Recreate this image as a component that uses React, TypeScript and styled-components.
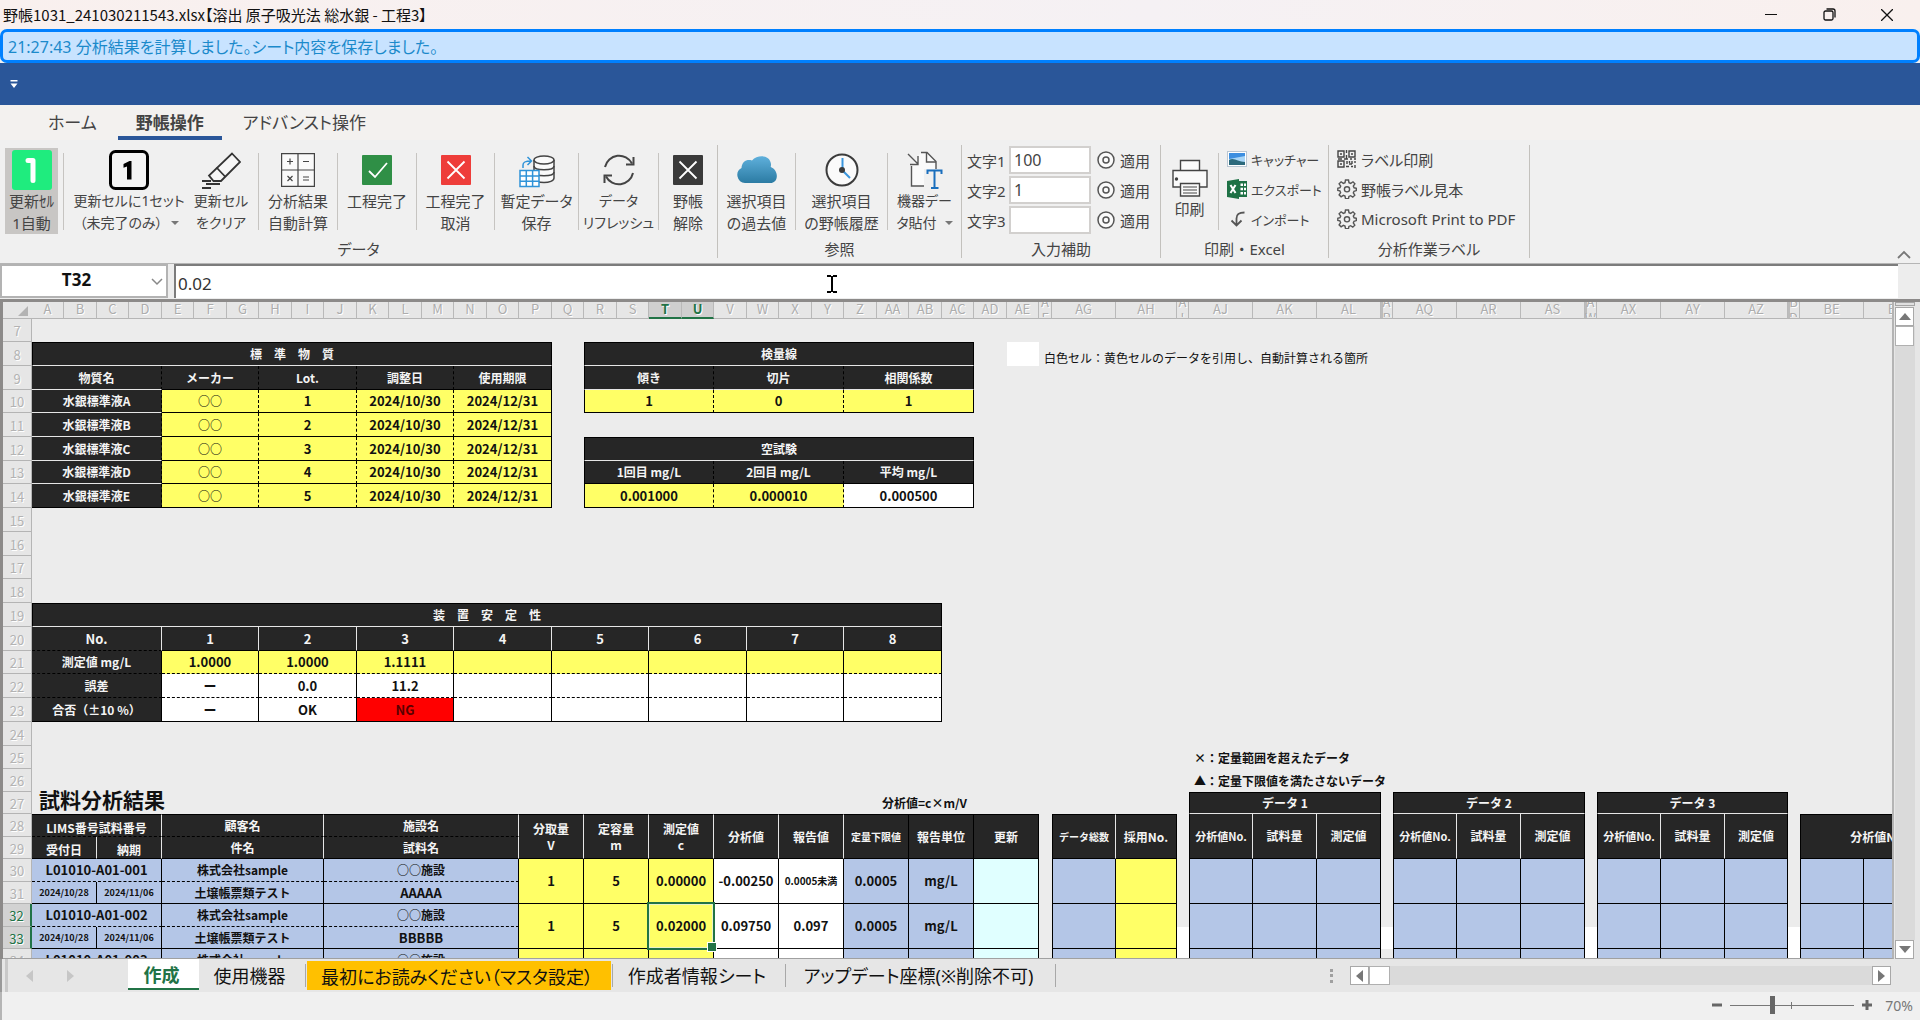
import React from "react";
import styled, { createGlobalStyle, css } from "styled-components";

const UI_FONT = `"Noto Sans", "Noto Sans CJK JP", sans-serif`;
const JP_FONT = `"Noto Sans CJK JP", "Noto Sans", sans-serif`;

const GlobalStyle = createGlobalStyle`
  * { box-sizing: border-box; }
  html, body, #root { height: 100%; }
  body { margin: 0; font-family: ${UI_FONT}; overflow: hidden; background: #f0f0f0; }
  button, input { font: inherit; color: inherit; font-feature-settings: inherit; }
  button { background: none; border: 0; padding: 0; margin: 0; }
  svg { flex: none; }
`;

/* ---------- window chrome ---------- */

const Shell = styled.div`
  height: 100vh;
  display: flex;
  flex-direction: column;
  font-feature-settings: "palt";
  color: #444;
`;

const TitleBar = styled.header`
  height: 29px;
  flex: none;
  display: flex;
  align-items: center;
  padding-right: 4px;
  background: linear-gradient(90deg, #f9f0ee, #f5f1f4 60%, #f9f0ee);
  color: #111;
`;

const Title = styled.h1`
  margin: 0;
  padding-left: 3px;
  flex: 1;
  font-family: ${JP_FONT};
  font-size: 15px;
  line-height: 20px;
  font-weight: 400;
`;

const WindowButton = styled.button`
  width: 58px;
  height: 29px;
  display: grid;
  place-items: center;
`;

const Notice = styled.div`
  height: 34px;
  flex: none;
  display: flex;
  align-items: center;
  padding-left: 5px;
  border: 3px solid #0080ff;
  border-radius: 7px;
  background: #c8e3ff;
  color: #1b8acb;
  font-size: 16px;
`;

const BlueBand = styled.div`
  height: 42px;
  flex: none;
  padding: 0 0 4px 9px;
  display: flex;
  align-items: center;
  background: #2a5699;
`;

/* ---------- ribbon ---------- */

const TabStrip = styled.nav`
  height: 35px;
  flex: none;
  display: flex;
  gap: 3px;
  padding-left: 30px;
  background: #f3f1ef;
`;

const RibbonTab = styled.button<{ $active?: boolean }>`
  padding: 5px 18px 0;
  font-size: 17px;
  line-height: 26px;
  font-weight: ${(p) => (p.$active ? 700 : 400)};
  border-bottom: 4px solid ${(p) => (p.$active ? "#2a5699" : "transparent")};
`;

const Ribbon = styled.div`
  height: 123px;
  flex: none;
  display: flex;
  padding-top: 5px;
  background: #f0f0f0;
  font-size: 15px;
`;

const Group = styled.section`
  height: 113px;
  padding: 0 5px;
  display: flex;
  flex-direction: column;
  border-right: 1px solid #c3c1bd;
`;

const GroupBody = styled.div`
  height: 95px;
  display: flex;
`;

const GroupLabel = styled.div`
  line-height: 18px;
  text-align: center;
`;

const Divider = styled.div`
  width: 1px;
  height: 77px;
  margin: 8px 5px 0;
  background: #c6c4c1;
`;

const BigButton = styled.button<{ $w: number; $pressed?: boolean; $low?: boolean; $dense?: boolean }>`
  width: ${(p) => p.$w}px;
  height: 86px;
  margin-top: ${(p) => (p.$low ? 11 : 3)}px;
  display: flex;
  flex-direction: column;
  align-items: center;
  white-space: nowrap;
  font-size: ${(p) => (p.$dense ? 14 : 15)}px;
  background: ${(p) => (p.$pressed ? "#c8c6c4" : "transparent")};
`;

const IconSlot = styled.span`
  height: 42px;
  padding-top: 2px;
  flex: none;
  display: grid;
  place-items: center;
`;

const Line = styled.span`
  height: 22px;
  line-height: 22px;
  display: flex;
  align-items: center;
  gap: 8px;
`;

const Caret = styled.span`
  border: 4px solid transparent;
  border-top-color: #777;
  border-bottom: 0;
`;

const FieldList = styled.div`
  padding: 1px 5px 0 0;
  display: flex;
  flex-direction: column;
  gap: 2px;
`;

const FieldRow = styled.div`
  height: 28px;
  display: flex;
  align-items: center;
`;

const FieldLabel = styled.label`
  width: 42px;
`;

const Field = styled.input`
  width: 82px;
  height: 28px;
  padding: 0 3px;
  border: 2px solid #d2d0ce;
  background: #fff;
  font-size: 16px;
`;

const ApplyButton = styled.button`
  margin-left: 6px;
  display: flex;
  align-items: center;
  gap: 5px;
`;

const SmallList = styled.div<{ $w: number; $dense?: boolean }>`
  width: ${(p) => p.$w}px;
  padding-left: 3px;
  display: flex;
  flex-direction: column;
  font-size: ${(p) => (p.$dense ? 13 : 15)}px;
`;

const SmallButton = styled.button`
  height: 30px;
  padding-bottom: 2px;
  display: flex;
  align-items: center;
  gap: 4px;
  white-space: nowrap;
`;

const Collapse = styled.button`
  margin-left: auto;
  padding: 0 9px 0 0;
  align-self: flex-end;
`;

/* ---------- formula bar ---------- */

const FormulaBar = styled.div`
  height: 36px;
  flex: none;
  position: relative;
  display: flex;
  gap: 6px;
  padding-right: 22px;
  background: #ededed;
  border-top: 1px solid #b5b5b5;
`;

const NameBox = styled.div`
  width: 168px;
  height: 34px;
  padding-bottom: 2px;
  display: flex;
  align-items: center;
  border: 2px solid #b3b3b3;
  background: #fff;
`;

const NameInput = styled.input`
  width: 149px;
  border: 0;
  background: none;
  outline: 0;
  text-align: center;
  font-size: 17px;
  line-height: 24px;
  font-weight: 700;
  color: #111;
`;

const FormulaInput = styled.input`
  flex: 1;
  height: 34px;
  padding: 2px 2px 0;
  border: 0;
  border-top: 2px solid #7c7c7c;
  border-left: 2px solid #7c7c7c;
  outline: 0;
  background: #fff;
  font-size: 17px;
  color: #333;
`;

const TextCursor = styled.svg`
  position: absolute;
  left: 826px;
  top: 11px;
`;

/* ---------- sheet ---------- */

const SheetArea = styled.div`
  flex: 1;
  min-height: 0;
  display: flex;
  border-top: 3px solid #8c8a89;
  border-left: 3px solid #8c8a89;
  background: #e6e6e6;
`;

const SheetView = styled.div`
  flex: 1;
  min-width: 0;
  overflow: hidden;
  background: #ececec;
  border-right: 2px solid #b4b4b4;
  border-bottom: 1px solid #a0a0a0;
  font-family: ${JP_FONT};
  font-feature-settings: normal;
`;

const Sheet = styled.table<{ $w: number }>`
  width: ${(p) => p.$w}px;
  table-layout: fixed;
  border-collapse: separate;
  border-spacing: 0;
  color: #111;
`;

const ColHead = styled.th<{ $on?: boolean; $split?: boolean }>`
  height: 17px;
  padding: 0;
  vertical-align: top;
  border-right: 1px solid #b9b9b9;
  border-bottom: ${(p) => (p.$on ? "2px solid #217346" : "1px solid #b5b5b5")};
  background: ${(p) => (p.$on ? "#cfcfcf" : "#e6e6e6")};
  color: ${(p) => (p.$on ? "#217346" : "#adadad")};
  font-size: 13px;
  font-weight: ${(p) => (p.$on ? 700 : 400)};
  text-shadow: 1px 1px 0 #fff;
  box-shadow: ${(p) => (p.$split ? "inset 2px 0 #bcbcbc" : "none")};
`;

const HeadText = styled.div<{ $narrow?: boolean }>`
  height: 15px;
  line-height: ${(p) => (p.$narrow ? 16 : 14)}px;
  ${(p) =>
    p.$narrow &&
    css`
      overflow: hidden;
      display: flex;
      align-items: center;
      justify-content: center;
      word-break: break-all;
    `}
`;

const Corner = styled.th`
  padding: 0 4px 0 0;
  background: #e6e6e6;
  border-bottom: 1px solid #b5b5b5;
  line-height: 10px;
  text-align: right;
`;

const RowHead = styled.th<{ $h: number; $on?: boolean }>`
  height: ${(p) => p.$h}px;
  padding: 2px 0 0;
  border-right: ${(p) => (p.$on ? "2px solid #217346" : "1px solid #b5b5b5")};
  border-bottom: 1px solid #b4b4b4;
  background: ${(p) => (p.$on ? "#d2d2d2" : "#e6e6e6")};
  color: ${(p) => (p.$on ? "#217346" : "#b3b3b3")};
  font-size: 13px;
  line-height: 16px;
  font-weight: 400;
  text-shadow: 1px 1px 0 #fff;
`;

const LINES: Record<string, string> = {
  k: "1px solid #000",
  w: "1px solid #e6e6e6",
  d: "1px dashed #000",
};

type CellLook = {
  bg?: string;
  fg?: string;
  size?: number;
  weight?: number;
  t?: string;
  r?: string;
  b?: string;
  l?: string;
  left?: boolean;
  low?: boolean;
  title?: boolean;
  active?: boolean;
};

const Td = styled.td<{ $look: CellLook }>`
  padding: 0;
  text-align: center;
  vertical-align: ${(p) => (p.$look.low ? "bottom" : "middle")};
  white-space: nowrap;
  line-height: 16px;
  font-size: ${(p) => p.$look.size ?? 12}px;
  font-weight: ${(p) => p.$look.weight ?? 700};
  color: ${(p) => p.$look.fg ?? "#111"};
  background: ${(p) => p.$look.bg ?? "transparent"};
  ${(p) => p.$look.t && `border-top: ${LINES[p.$look.t]};`}
  ${(p) => p.$look.r && `border-right: ${LINES[p.$look.r]};`}
  ${(p) => p.$look.b && `border-bottom: ${LINES[p.$look.b]};`}
  ${(p) => p.$look.l && `border-left: ${LINES[p.$look.l]};`}
  ${(p) =>
    p.$look.left &&
    css`
      text-align: left;
      padding-left: 5px;
    `}
  ${(p) =>
    p.$look.title &&
    css`
      padding-left: 7px;
      vertical-align: bottom;
      line-height: 30px;
    `}
  ${(p) =>
    p.$look.active &&
    css`
      position: relative;
      &::before {
        content: "";
        position: absolute;
        inset: -2px;
        border: 2px solid #217346;
        box-shadow: inset 0 0 0 1px #e9f3c8;
      }
      &::after {
        content: "";
        position: absolute;
        right: -4px;
        bottom: -4px;
        width: 8px;
        height: 8px;
        border: 1px solid #fff;
        background: #217346;
      }
    `}
`;

/* ---------- scrollbars, sheet tabs, status ---------- */

const VScroll = styled.div`
  width: 26px;
  flex: none;
  padding: 0 5px 0 1px;
  display: flex;
  flex-direction: column;
`;

const SplitGrip = styled.div`
  height: 4px;
  margin-bottom: 1px;
  border: 1px solid #a5a5a5;
  background: #e0e0e0;
`;

const Track = styled.div`
  flex: 1;
  display: flex;
  align-items: flex-start;
  background: #dadada;
`;

const Thumb = styled.div<{ $w: number; $h: number }>`
  width: ${(p) => p.$w}px;
  height: ${(p) => p.$h}px;
  border: 1px solid #b0b0b0;
  background: #fff;
`;

const ScrollButton = styled.button`
  width: 19px;
  height: 19px;
  display: grid;
  place-items: center;
  border: 1px solid #a8a8a8;
  background: #fff;
`;

const Arrow = styled.span<{ $dir: "up" | "down" | "left" | "right"; $c?: string }>`
  display: block;
  border: 6px solid transparent;
  ${(p) => {
    const c = p.$c ?? "#777";
    if (p.$dir === "up") return `border-bottom: 7px solid ${c}; border-top: 0;`;
    if (p.$dir === "down") return `border-top: 7px solid ${c}; border-bottom: 0;`;
    if (p.$dir === "left") return `border-right: 7px solid ${c}; border-left: 0;`;
    return `border-left: 7px solid ${c}; border-right: 0;`;
  }}
`;

const SheetTabs = styled.div`
  height: 33px;
  flex: none;
  display: flex;
  align-items: flex-start;
  padding: 0 29px 0 3px;
  border-left: 2px solid #9a9a9a;
  background: #e6e6e6;
  color: #111;
  font-size: 18px;
`;

const TabNav = styled.div`
  width: 123px;
  height: 33px;
  display: flex;
  align-items: center;
  gap: 34px;
  padding-left: 18px;
  border-left: 3px solid #c9c9c9;
`;

const SheetTab = styled.button<{ $w: number; $kind?: "active" | "marked" }>`
  min-width: ${(p) => p.$w}px;
  height: 31px;
  padding-right: 4px;
  white-space: nowrap;
  ${(p) =>
    p.$kind === "active" &&
    css`
      background: #fff;
      color: #217346;
      font-weight: 700;
      border-bottom: 2px solid #217346;
    `}
  ${(p) =>
    p.$kind === "marked" &&
    css`
      background: #ffc000;
      border-top: 2px solid #e6e6e6;
    `}
`;

const TabGap = styled.span`
  width: 1px;
  height: 23px;
  margin: 5px 1px 0;
  background: #a8a8a8;
`;

const Dots = styled.span`
  width: 3px;
  height: 14px;
  margin: 10px 17px 0 auto;
  border-left: 3px dotted #a0a0a0;
`;

const HScroll = styled.div`
  width: 541px;
  margin-top: 7px;
  display: flex;
`;

const StatusBar = styled.footer`
  height: 28px;
  flex: none;
  display: flex;
  align-items: center;
  justify-content: flex-end;
  gap: 8px;
  padding: 0 7px 2px 0;
  border-left: 2px solid #b5b5b5;
  background: #f0f0f0;
  font-size: 15px;
  color: #777;
`;

const Zoom = styled.input`
  appearance: none;
  width: 124px;
  height: 18px;
  margin: 0;
  background:
    linear-gradient(#777, #777) 61px 6px / 1px 7px no-repeat,
    linear-gradient(#777, #777) 0 9px / 100% 1px no-repeat;
  &::-webkit-slider-thumb {
    appearance: none;
    width: 5px;
    height: 18px;
    background: #666;
  }
`;

const ZoomStep = styled.button`
  width: 10px;
  display: grid;
  place-items: center;
`;

const ZoomValue = styled.span`
  margin-left: 5px;
  font-size: 14px;
`;

/* ---------- icons ---------- */

const AutoOneIcon = () => (
  <svg width="40" height="40" viewBox="0 0 40 40">
    <rect width="40" height="40" rx="3" fill="#1fec7e" />
    <path d="M16 10.500h5v20" fill="none" stroke="#fff" strokeWidth="5" strokeLinejoin="round" strokeLinecap="round" />
  </svg>
);
const SetOneIcon = () => (
  <svg width="40" height="40" viewBox="0 0 40 40">
    <rect x="1.5" y="1.5" width="37" height="37" rx="5" fill="#f4f4f4" stroke="#000" strokeWidth="3" />
    <path d="M22.500 29.500h-4.500V16.500l-3.500 1.200v-3.700L20.500 11h2z" fill="#000" />
  </svg>
);
const EraserIcon = () => (
  <svg width="40" height="40" viewBox="0 0 40 40" fill="none" stroke="#333" strokeWidth="1.800">
    <path d="M31 3.500l8 8.500L20 31H12.500L8 25.500z" fill="#f6f6f6" />
    <path d="M15.500 17.500l9 9.500" />
    <path d="M1 31h9M5 34h14M1 38h9" />
  </svg>
);
const CalcIcon = () => (
  <svg width="34" height="34" viewBox="0 0 34 34" fill="#fafafa" stroke="#444" strokeWidth="1.200">
    <path d="M.6.6h32.800v32.800H.6zM17 .6v32.800M.6 17h32.800" />
    <path d="M6 8.500h6M9 5.500v6M22 8.500h6M6.500 23l5 5M11.500 23l-5 5M22 24h6M22 27h6" />
  </svg>
);
const BoxIcon = ({ fill, check }: { fill: string; check?: boolean }) => (
  <svg width="30" height="30" viewBox="0 0 30 30">
    <rect width="30" height="30" rx="1" fill={fill} />
    <path d={check ? "M7 16l6 6L25 8" : "M6.500 6.500l17 17M23.500 6.500l-17 17"} fill="none" stroke="#fff" strokeWidth="1.800" />
  </svg>
);
const TempSaveIcon = () => (
  <svg width="36" height="36" viewBox="0 0 36 36" fill="none">
    <g stroke="#444" strokeWidth="1.500" fill="#fafafa">
      <path d="M15 8v18c0 6 20 6 20 0V8" />
      <path d="M15 14c0 5 20 5 20 0M15 20c0 5 20 5 20 0" fill="none" />
      <ellipse cx="25" cy="8" rx="10" ry="4" />
    </g>
    <path d="M1 18.500h19v16H1zM1 24h19M1 29.300h19M7.300 18.500v16M13.600 18.500v16" fill="#fff" stroke="#2f93d8" strokeWidth="1.500" />
    <path d="M4 16v-3c0-3 2-4 8-4M8.500 5l4 4-4 4" stroke="#2f93d8" strokeWidth="1.500" />
  </svg>
);
const RefreshIcon = () => (
  <svg width="32" height="32" viewBox="0 0 32 32" fill="none" stroke="#444" strokeWidth="2">
    <path d="M2 13A14.500 14.500 0 0 1 29 9.500M30 19A14.500 14.500 0 0 1 3 22.500" />
    <path d="M30.500 3v7.500H23M1.500 29v-7.500H9" />
  </svg>
);
const CloudIcon = () => (
  <svg width="40" height="28" viewBox="0 0 40 28">
    <defs>
      <linearGradient id="cloud" x1="0" y1="0" x2="0" y2="1">
        <stop offset="0" stopColor="#5fb0dc" />
        <stop offset="1" stopColor="#2b7ba3" />
      </linearGradient>
    </defs>
    <path d="M8 27a8 8 0 0 1-3.500-15C5 5 10 3 15 4.500 21-2 33-1 34 8c0 1 0 2-.3 3C42 14 42 27 33 27z" fill="url(#cloud)" />
  </svg>
);
const ClockIcon = () => (
  <svg width="34" height="34" viewBox="0 0 34 34" fill="none">
    <circle cx="17" cy="17" r="15.500" fill="#fafafa" stroke="#3b3b3b" strokeWidth="2" />
    <path d="M17.500 17V5M17 17l8 8" stroke="#3a96dd" strokeWidth="2" />
    <circle cx="17" cy="17" r="3" fill="#3b3b3b" />
  </svg>
);
const PasteIcon = () => (
  <svg width="36" height="40" viewBox="0 0 36 40" fill="none" stroke="#555" strokeWidth="1.400">
    <path d="M14 2.500h6l9 9V36H4.500V16" fill="#fafafa" />
    <path d="M19.500 2.500v9.500H29M1 4l10 10M11 6v8.500H3" />
    <path d="M17 19h18v20H17z" fill="#f0f0f0" stroke="none" />
    <path d="M20.500 24v-3.500h14V24M27.500 20.500V38M24 38h7.500" stroke="#1a6fbd" strokeWidth="2" />
  </svg>
);
const RingIcon = () => (
  <svg width="18" height="18" viewBox="0 0 18 18" fill="none" stroke="#555">
    <circle cx="9" cy="9" r="8" strokeWidth="1.500" fill="#fafafa" />
    <circle cx="9" cy="9" r="3" strokeWidth="1.500" />
  </svg>
);
const PrinterIcon = () => (
  <svg width="36" height="38" viewBox="0 0 36 38" fill="#fafafa" stroke="#444" strokeWidth="1.400">
    <path d="M8.500 12V1.500h19V12M8.500 28H1V11.500h34V28h-7" />
    <path d="M8.500 24.500h19V37h-19z" />
    <path d="M11 28h14M11 31h14M11 34h14" strokeWidth="1" />
    <circle cx="4.500" cy="20" r="1" fill="#222" />
  </svg>
);
const PictureIcon = () => (
  <svg width="20" height="16" viewBox="0 0 20 16">
    <rect x=".5" y=".5" width="19" height="15" fill="#fff" stroke="#b9c6d2" />
    <rect x="2" y="2" width="16" height="12" fill="#a9d6f7" />
    <path d="M2 2h16v3L2 8z" fill="#3d8fe0" />
    <path d="M2 9c5-3 9 2 16 2v3H2z" fill="#2d6a7c" />
  </svg>
);
const ExcelIcon = () => (
  <svg width="20" height="20" viewBox="0 0 20 20">
    <rect x="11" y="2" width="9" height="16" fill="#1e7145" />
    <path d="M13.500 4.500h2.500v2.500h-2.500zM17 4.500h2v2.500h-2zM13.500 8.700h2.500v2.500h-2.500zM17 8.700h2v2.500h-2zM13.500 13h2.500v2.500h-2.500zM17 13h2v2.500h-2z" fill="#fff" />
    <path d="M0 2L12 0v20L0 18z" fill="#1e7145" />
    <path d="M3.500 6l5 8M8.500 6l-5 8" stroke="#fff" strokeWidth="2" />
  </svg>
);
const ImportIcon = () => (
  <svg width="20" height="18" viewBox="0 0 20 18" fill="none" stroke="#555" strokeWidth="1.800">
    <path d="M17.500 2.500c-5 0-8 1-8 6v7M4.500 10.500l5 5 5-5" />
  </svg>
);
const QrIcon = () => (
  <svg width="20" height="18" viewBox="0 0 20 18" fill="none" stroke="#444" strokeWidth="1.400">
    <path d="M1 1h6v6H1zM12 1h6v6h-6zM1 11h6v6H1z" />
    <path d="M3 4h2M14 4h2M3 14h2M9.500 0v3M9.500 5v4M1 9h4M7 9h4M13 9h2M17 9h2M10 11v3M12.500 11v2M15 11v3M18 11v2M9 16.500h3M14 16.500h2M18 15v3M12 14h3" />
  </svg>
);
const GearIcon = () => (
  <svg width="20" height="20" viewBox="0 0 20 20" fill="none" stroke="#555" strokeWidth="1.400">
    <path d="M8.500 1h3l.5 2.700 1.700.7L16 2.800l1.900 2-1.600 2.300.8 1.700 2.200.5v2.300l-2.300.7-.7 1.700 1.500 2.200-2 2-2.200-1.500-1.700.7-.4 2.300h-3L8 17l-1.700-.7-2.200 1.500-2-2 1.500-2.200-.7-1.700L.8 11.400V9.200l2.200-.5.7-1.700-1.600-2.200 2-2 2.200 1.600 1.700-.7z" />
    <circle cx="10" cy="10.300" r="2.600" />
  </svg>
);

/* ---------- ribbon content ---------- */

type BigProps = {
  w: number;
  icon: React.ReactNode;
  lines: string[];
  pressed?: boolean;
  low?: boolean;
  dense?: boolean;
  menu?: boolean;
};

const Big = ({ w, icon, lines, pressed, low, dense, menu }: BigProps) => (
  <BigButton type="button" $w={w} $pressed={pressed} $low={low} $dense={dense} aria-pressed={pressed}>
    <IconSlot>{icon}</IconSlot>
    {lines.map((text, i) => (
      <Line key={i}>
        {text}
        {menu && i === lines.length - 1 && <Caret />}
      </Line>
    ))}
  </BigButton>
);

const FIELDS = [
  { label: "文字1", value: "100" },
  { label: "文字2", value: "1" },
  { label: "文字3", value: "" },
];

const RibbonPanel = () => (
  <Ribbon>
    <Group>
      <GroupBody>
        <Big w={53} pressed icon={<AutoOneIcon />} lines={["更新ｾﾙ", "1自動"]} />
        <Divider />
        <Big w={120} menu dense icon={<SetOneIcon />} lines={["更新セルに1セット", "（未完了のみ）"]} />
        <Big w={64} dense icon={<EraserIcon />} lines={["更新セル", "をクリア"]} />
        <Divider />
        <Big w={68} icon={<CalcIcon />} lines={["分析結果", "自動計算"]} />
        <Divider />
        <Big w={68} icon={<BoxIcon fill="#2f8f46" check />} lines={["工程完了"]} />
        <Divider />
        <Big w={67} icon={<BoxIcon fill="#ee3d3a" />} lines={["工程完了", "取消"]} />
        <Divider />
        <Big w={73} icon={<TempSaveIcon />} lines={["暫定データ", "保存"]} />
        <Divider />
        <Big w={69} dense icon={<RefreshIcon />} lines={["データ", "リフレッシュ"]} />
        <Divider />
        <Big w={48} icon={<BoxIcon fill="#3a3a3a" />} lines={["野帳", "解除"]} />
      </GroupBody>
      <GroupLabel>データ</GroupLabel>
    </Group>
    <Group>
      <GroupBody>
        <Big w={67} icon={<CloudIcon />} lines={["選択項目", "の過去値"]} />
        <Divider />
        <Big w={81} icon={<ClockIcon />} lines={["選択項目", "の野帳履歴"]} />
        <Divider />
        <Big w={63} menu dense icon={<PasteIcon />} lines={["機器デー", "タ貼付"]} />
      </GroupBody>
      <GroupLabel>参照</GroupLabel>
    </Group>
    <Group>
      <GroupBody>
        <FieldList>
          {FIELDS.map((f, i) => (
            <FieldRow key={f.label}>
              <FieldLabel htmlFor={`text-${i}`}>{f.label}</FieldLabel>
              <Field id={`text-${i}`} defaultValue={f.value} />
              <ApplyButton type="button">
                <RingIcon />
                適用
              </ApplyButton>
            </FieldRow>
          ))}
        </FieldList>
      </GroupBody>
      <GroupLabel>入力補助</GroupLabel>
    </Group>
    <Group>
      <GroupBody>
        <Big w={47} low icon={<PrinterIcon />} lines={["印刷"]} />
        <Divider />
        <SmallList $w={99} $dense>
          <SmallButton type="button"><PictureIcon />キャッチャー</SmallButton>
          <SmallButton type="button"><ExcelIcon />エクスポート</SmallButton>
          <SmallButton type="button"><ImportIcon />インポート</SmallButton>
        </SmallList>
      </GroupBody>
      <GroupLabel>印刷 ・ Excel</GroupLabel>
    </Group>
    <Group>
      <GroupBody>
        <SmallList $w={190}>
          <SmallButton type="button"><QrIcon />ラベル印刷</SmallButton>
          <SmallButton type="button"><GearIcon />野帳ラベル見本</SmallButton>
          <SmallButton type="button"><GearIcon />Microsoft Print to PDF</SmallButton>
        </SmallList>
      </GroupBody>
      <GroupLabel>分析作業ラベル</GroupLabel>
    </Group>
    <Collapse type="button" aria-label="リボンを折りたたむ">
      <svg width="14" height="9" viewBox="0 0 14 9" fill="none" stroke="#777" strokeWidth="1.800">
        <path d="M1 8l6-6 6 6" />
      </svg>
    </Collapse>
  </Ribbon>
);

/* ---------- sheet data ---------- */

const letter = (i: number): string =>
  i < 26 ? String.fromCharCode(65 + i) : letter(Math.floor(i / 26) - 1) + letter(i % 26);

// Columns A to AE share one pitch; the data blocks to the right are wider, with narrow spacers.
const COLS: { name: string; w: number; narrow?: boolean; split?: boolean }[] = [
  ...Array.from({ length: 31 }, (_, i) => ({ name: letter(i), w: i % 2 ? 33 : 32 })),
  { name: "AF", w: 13, narrow: true },
  { name: "AG", w: 64 },
  { name: "AH", w: 61 },
  { name: "AI", w: 12, narrow: true },
  { name: "AJ", w: 64 },
  { name: "AK", w: 64 },
  { name: "AL", w: 64 },
  { name: "AP", w: 12, narrow: true, split: true },
  { name: "AQ", w: 64 },
  { name: "AR", w: 64 },
  { name: "AS", w: 64 },
  { name: "AW", w: 12, narrow: true, split: true },
  { name: "AX", w: 64 },
  { name: "AY", w: 64 },
  { name: "AZ", w: 63 },
  { name: "BD", w: 12, narrow: true, split: true },
  { name: "BE", w: 64 },
  { name: "BF", w: 64 },
  { name: "BG", w: 28 },
];
const SHEET_WIDTH = 29 + COLS.reduce((sum, c) => sum + c.w, 0);
const colIndex = (name: string) => COLS.findIndex((c) => c.name === name);

const FIRST_ROW = 7;
const ROW_HEIGHTS = [
  23, 24, 24, 23, 24, 24, 23, 24, 24, 24, 23, 24, 24, 24, 23, 24, 24, 24, 23, 23, 22, 23, 22, 23, 22, 23, 22, 23,
];

const DARK = "#262626";
const YELLOW = "#ffff66";
const BLUE = "#b4c6e7";
const CYAN = "#e0ffff";
const WHITE = "#fff";

type Cell = { cs: number; rs: number; text: string; look: CellLook };
const cells = new Map<string, Cell>();
const covered = new Set<string>();

function put(row: number, from: string, cs: number, rs: number, text: string, look: CellLook) {
  const c0 = colIndex(from);
  for (let r = row; r < row + rs; r++) for (let c = c0; c < c0 + cs; c++) covered.add(`${r}:${c}`);
  cells.set(`${row}:${c0}`, { cs, rs, text, look });
}

const head = (extra: CellLook = {}): CellLook => ({ bg: DARK, fg: "#f4f4f4", ...extra });

// Reference materials
put(8, "A", 16, 1, "標　準　物　質", head({ t: "k", b: "w", r: "k", l: "k" }));
["A", "E", "H", "K", "N"].forEach((c, i) =>
  put(9, c, i ? 3 : 4, 1, ["物質名", "メーカー", "Lot.", "調整日", "使用期限"][i], head({ r: i === 4 ? "k" : "d", b: i ? "k" : "w" })),
);
["A", "B", "C", "D", "E"].forEach((name, i) => {
  const r = 10 + i;
  put(r, "A", 4, 1, `水銀標準液${name}`, head({ r: "d", b: i === 4 ? "k" : "w" }));
  const y: CellLook = { bg: YELLOW, size: 13, r: "d", b: "k" };
  put(r, "E", 3, 1, "○○", { ...y, size: 12 });
  put(r, "H", 3, 1, String(i + 1), y);
  put(r, "K", 3, 1, "2024/10/30", y);
  put(r, "N", 3, 1, "2024/12/31", { ...y, r: "k" });
});

// Calibration curve and blank test
put(8, "R", 12, 1, "検量線", head({ t: "k", b: "w", r: "k", l: "k" }));
put(12, "R", 12, 1, "空試験", head({ t: "k", b: "w", r: "k", l: "k" }));
["R", "V", "Z"].forEach((c, i) => {
  const r = i === 2 ? "k" : "d";
  const l = i === 0 ? "k" : undefined;
  put(9, c, 4, 1, ["傾き", "切片", "相関係数"][i], head({ r, l, b: "w" }));
  put(10, c, 4, 1, ["1", "0", "1"][i], { bg: YELLOW, size: 13, r, l, b: "k" });
  put(13, c, 4, 1, ["1回目 mg/L", "2回目 mg/L", "平均 mg/L"][i], head({ r, l, b: "k" }));
  put(14, c, 4, 1, ["0.001000", "0.000010", "0.000500"][i], { bg: i === 2 ? WHITE : YELLOW, size: 13, r, l, b: "k" });
});

// Legend
put(8, "AE", 1, 1, "", { bg: WHITE });
put(8, "AF", 12, 1, "白色セル：黄色セルのデータを引用し、自動計算される箇所", { left: true, low: true, weight: 400 });

// Instrument stability
put(19, "A", 28, 1, "装　置　安　定　性", head({ t: "k", b: "w", r: "k", l: "k" }));
["No.", "測定値 mg/L", "誤差", "合否（±10 %）"].forEach((t, i) =>
  put(20 + i, "A", 4, 1, t, head({ r: i ? "k" : "w", b: i === 3 ? "k" : "d", size: i < 1 ? 13 : 12 })),
);
for (let n = 0; n < 8; n++) {
  const c = letter(4 + n * 3);
  put(20, c, 3, 1, String(n + 1), head({ r: n === 7 ? "k" : "w", b: "k", size: 13 }));
  put(21, c, 3, 1, ["1.0000", "1.0000", "1.1111"][n] ?? "", { bg: YELLOW, size: 13, r: "k", b: "d" });
  put(22, c, 3, 1, ["ー", "0.0", "11.2"][n] ?? "", { bg: WHITE, size: 13, r: "k", b: "d" });
  put(23, c, 3, 1, ["ー", "OK", "NG"][n] ?? "", {
    bg: n === 2 ? "#ff0000" : WHITE,
    fg: n === 2 ? "#5a0000" : undefined,
    size: 13,
    r: "k",
    b: "k",
  });
}

// Notes
put(25, "AJ", 7, 1, "×：定量範囲を超えたデータ", { left: true });
put(26, "AJ", 7, 1, "▲：定量下限値を満たさないデータ", { left: true });
put(26, "A", 9, 2, "試料分析結果", { left: true, title: true, size: 21 });
put(27, "AA", 4, 1, "分析値=c×m/V", { left: true });

// Sample results: heading
put(28, "A", 4, 1, "LIMS番号試料番号", head({ t: "k", r: "w", b: "d", low: true }));
put(29, "A", 2, 1, "受付日", head({ r: "w", b: "k", low: true }));
put(29, "C", 2, 1, "納期", head({ r: "w", b: "k", low: true }));
put(28, "E", 5, 1, "顧客名", head({ t: "k", r: "w", b: "d" }));
put(29, "E", 5, 1, "件名", head({ r: "w", b: "k" }));
put(28, "J", 6, 1, "施設名", head({ t: "k", r: "w", b: "d" }));
put(29, "J", 6, 1, "試料名", head({ r: "w", b: "k" }));
["P", "R", "T", "V", "X", "Z", "AB", "AD"].forEach((c, i) =>
  put(28, c, 2, 2, ["分取量\nV", "定容量\nm", "測定値\nc", "分析値", "報告値", "定量下限値", "報告単位", "更新"][i],
    head({ t: "k", b: "k", r: i > 4 ? "k" : "w", size: i === 5 ? 10 : 12 })),
);
put(28, "AG", 1, 2, "データ総数", head({ t: "k", b: "k", r: "w", l: "k", size: 10 }));
put(28, "AH", 1, 2, "採用No.", head({ t: "k", b: "k", r: "k" }));

const BLOCKS = [["AJ", "AK", "AL"], ["AQ", "AR", "AS"], ["AX", "AY", "AZ"]];
BLOCKS.forEach((cols, n) => {
  put(27, cols[0], 3, 1, `データ ${n + 1}`, head({ t: "k", b: "w", r: "k", l: "k" }));
  cols.forEach((c, i) =>
    put(28, c, 1, 2, ["分析値No.", "試料量", "測定値"][i],
      head({ b: "k", r: i === 2 ? "k" : "w", l: i ? undefined : "k", size: i ? 12 : 11 })),
  );
});
put(28, "BE", 3, 2, "分析値No.", head({ t: "k", b: "k", l: "k" }));

// Sample results: records
const RECORDS = [
  { row: 30, rs: 2, id: "L01010-A01-001", sample: "AAAAA", c: "0.00000", value: "-0.00250", report: "0.0005未満", small: true },
  { row: 32, rs: 2, id: "L01010-A01-002", sample: "BBBBB", c: "0.02000", value: "0.09750", report: "0.097", active: true },
  { row: 34, rs: 1, id: "L01010-A01-003", sample: "", c: "", value: "", report: "" },
];
RECORDS.forEach((rec) => {
  const { row, rs } = rec;
  const full = rs === 2;
  const blue: CellLook = { bg: BLUE, r: "k", b: "k" };
  put(row, "A", 4, 1, rec.id, { bg: BLUE, r: "k", b: "d", size: 13 });
  put(row, "E", 5, 1, "株式会社sample", { bg: BLUE, r: "k", b: "d" });
  put(row, "J", 6, 1, "○○施設", { bg: BLUE, r: "k", b: "d" });
  if (full) {
    put(row + 1, "A", 2, 1, "2024/10/28", { ...blue, size: 9 });
    put(row + 1, "C", 2, 1, "2024/11/06", { ...blue, size: 9 });
    put(row + 1, "E", 5, 1, "土壌帳票類テスト", blue);
    put(row + 1, "J", 6, 1, rec.sample, { ...blue, size: 13 });
  }
  const num = (bg: string): CellLook => ({ bg, r: "k", b: "k", size: 13 });
  put(row, "P", 2, rs, full ? "1" : "", num(YELLOW));
  put(row, "R", 2, rs, full ? "5" : "", num(YELLOW));
  put(row, "T", 2, rs, rec.c, { ...num(YELLOW), active: rec.active });
  put(row, "V", 2, rs, rec.value, num(WHITE));
  put(row, "X", 2, rs, rec.report, { ...num(WHITE), size: rec.small ? 10 : 13 });
  put(row, "Z", 2, rs, full ? "0.0005" : "", num(BLUE));
  put(row, "AB", 2, rs, full ? "mg/L" : "", num(BLUE));
  put(row, "AD", 2, rs, "", num(CYAN));
  put(row, "AG", 1, rs, "", { ...blue, l: "k" });
  put(row, "AH", 1, rs, "", num(YELLOW));
  BLOCKS.forEach((cols) => cols.forEach((c, i) => put(row, c, 1, rs, "", { ...blue, l: i ? undefined : "k" })));
  put(row, "BE", 1, rs, "", { ...blue, l: "k" });
  put(row, "BF", 2, rs, "", blue);
});
[33, 34].forEach((r) => ["AI", "AP", "AW", "BD"].forEach((c) => {
  if (!(c === "AP" && r === 34)) put(r, c, 1, 1, "", { bg: WHITE });
}));

const SheetRow = ({ row, height }: { row: number; height: number }) => {
  const out: React.ReactNode[] = [];
  for (let c = 0; c < COLS.length; ) {
    const key = `${row}:${c}`;
    const cell = cells.get(key);
    if (cell) {
      out.push(
        <Td key={key} colSpan={cell.cs} rowSpan={cell.rs} $look={cell.look}>
          {cell.text.split("\n").map((t, i) => (
            <React.Fragment key={i}>
              {i > 0 && <br />}
              {t}
            </React.Fragment>
          ))}
        </Td>,
      );
      c += cell.cs;
    } else if (covered.has(key)) {
      c += 1;
    } else {
      let n = 1;
      while (c + n < COLS.length && !covered.has(`${row}:${c + n}`)) n += 1;
      out.push(<Td key={key} colSpan={n} $look={{}} />);
      c += n;
    }
  }
  return (
    <tr>
      <RowHead scope="row" $h={height} $on={row === 32 || row === 33}>{row}</RowHead>
      {out}
    </tr>
  );
};

const Spreadsheet = () => (
  <SheetView>
    <Sheet $w={SHEET_WIDTH}>
      <colgroup>
        <col width={29} />
        {COLS.map((c) => (
          <col key={c.name} width={c.w} />
        ))}
      </colgroup>
      <thead>
        <tr>
          <Corner>
            <svg width="10" height="10" viewBox="0 0 10 10"><path d="M10 0v10H0z" fill="#b3b3b3" /></svg>
          </Corner>
          {COLS.map((c) => (
            <ColHead key={c.name} scope="col" $on={c.name === "T" || c.name === "U"} $split={c.split}>
              <HeadText $narrow={c.narrow}>{c.name}</HeadText>
            </ColHead>
          ))}
        </tr>
      </thead>
      <tbody>
        {ROW_HEIGHTS.map((h, i) => (
          <SheetRow key={i} row={FIRST_ROW + i} height={h} />
        ))}
      </tbody>
    </Sheet>
  </SheetView>
);

/* ---------- page ---------- */

export default function App() {
  return (
    <Shell>
      <GlobalStyle />
      <TitleBar>
        <Title>野帳1031_241030211543.xlsx【溶出 原子吸光法 総水銀 - 工程3】</Title>
        <WindowButton aria-label="最小化">
          <svg width="12" height="12" viewBox="0 0 12 12" stroke="#111"><path d="M0 5.500h12" /></svg>
        </WindowButton>
        <WindowButton aria-label="元に戻す">
          <svg width="13" height="13" viewBox="0 0 13 13" fill="none" stroke="#111" strokeWidth="1.300">
            <rect x="1" y="3" width="9" height="9" rx="1.500" />
            <path d="M3.500 1H10a2 2 0 0 1 2 2v6.500" />
          </svg>
        </WindowButton>
        <WindowButton aria-label="閉じる">
          <svg width="12" height="12" viewBox="0 0 12 12" stroke="#111" strokeWidth="1.300"><path d="M0 0l12 12M12 0L0 12" /></svg>
        </WindowButton>
      </TitleBar>
      <Notice role="status">21:27:43 分析結果を計算しました。シート内容を保存しました。</Notice>
      <BlueBand>
        <button type="button" aria-label="クイック アクセス ツール バー">
          <svg width="10" height="8" viewBox="0 0 10 8" fill="#fff"><path d="M1.500 0h7v1.500h-7zM1.500 3.500h7L5 8z" /></svg>
        </button>
      </BlueBand>
      <TabStrip>
        <RibbonTab type="button">ホーム</RibbonTab>
        <RibbonTab type="button" $active>野帳操作</RibbonTab>
        <RibbonTab type="button">アドバンスト操作</RibbonTab>
      </TabStrip>
      <RibbonPanel />
      <FormulaBar>
        <NameBox>
          <NameInput aria-label="名前ボックス" defaultValue="T32" />
          <button type="button" aria-label="名前の一覧">
            <svg width="12" height="8" viewBox="0 0 12 8" fill="none" stroke="#888" strokeWidth="1.500"><path d="M1 1l5 5 5-5" /></svg>
          </button>
        </NameBox>
        <FormulaInput aria-label="数式バー" defaultValue="0.02" />
        <TextCursor width="12" height="18" viewBox="0 0 12 18" fill="none" stroke="#000" strokeWidth="2">
          <path d="M1 1h4M7 1h4M6 1v16M1 17h4M7 17h4" />
        </TextCursor>
      </FormulaBar>
      <SheetArea>
        <Spreadsheet />
        <VScroll>
          <SplitGrip />
          <ScrollButton type="button" aria-label="上へ"><Arrow $dir="up" /></ScrollButton>
          <Track><Thumb $w={19} $h={20} /></Track>
          <ScrollButton type="button" aria-label="下へ"><Arrow $dir="down" /></ScrollButton>
        </VScroll>
      </SheetArea>
      <SheetTabs>
        <TabNav>
          <button type="button" aria-label="前のシート"><Arrow $dir="left" $c="#c6c6c6" /></button>
          <button type="button" aria-label="次のシート"><Arrow $dir="right" $c="#c6c6c6" /></button>
        </TabNav>
        <SheetTab type="button" $w={71} $kind="active">作成</SheetTab>
        <SheetTab type="button" $w={105}>使用機器</SheetTab>
        <TabGap />
        <SheetTab type="button" $w={304} $kind="marked">最初にお読みください（マスタ設定）</SheetTab>
        <TabGap />
        <SheetTab type="button" $w={170}>作成者情報シート</SheetTab>
        <TabGap />
        <SheetTab type="button" $w={267}>アップデート座標(※削除不可)</SheetTab>
        <TabGap />
        <Dots />
        <HScroll>
          <ScrollButton type="button" aria-label="左へ"><Arrow $dir="left" /></ScrollButton>
          <Track><Thumb $w={21} $h={19} /></Track>
          <ScrollButton type="button" aria-label="右へ"><Arrow $dir="right" /></ScrollButton>
        </HScroll>
      </SheetTabs>
      <StatusBar>
        <ZoomStep type="button" aria-label="縮小">
          <svg width="10" height="10" viewBox="0 0 10 10"><path d="M0 5h10" stroke="#666" strokeWidth="3" /></svg>
        </ZoomStep>
        <Zoom type="range" aria-label="ズーム" min={0} max={100} defaultValue={33} />
        <ZoomStep type="button" aria-label="拡大">
          <svg width="10" height="10" viewBox="0 0 10 10"><path d="M0 5h10M5 0v10" stroke="#666" strokeWidth="3" /></svg>
        </ZoomStep>
        <ZoomValue>70%</ZoomValue>
      </StatusBar>
    </Shell>
  );
}
